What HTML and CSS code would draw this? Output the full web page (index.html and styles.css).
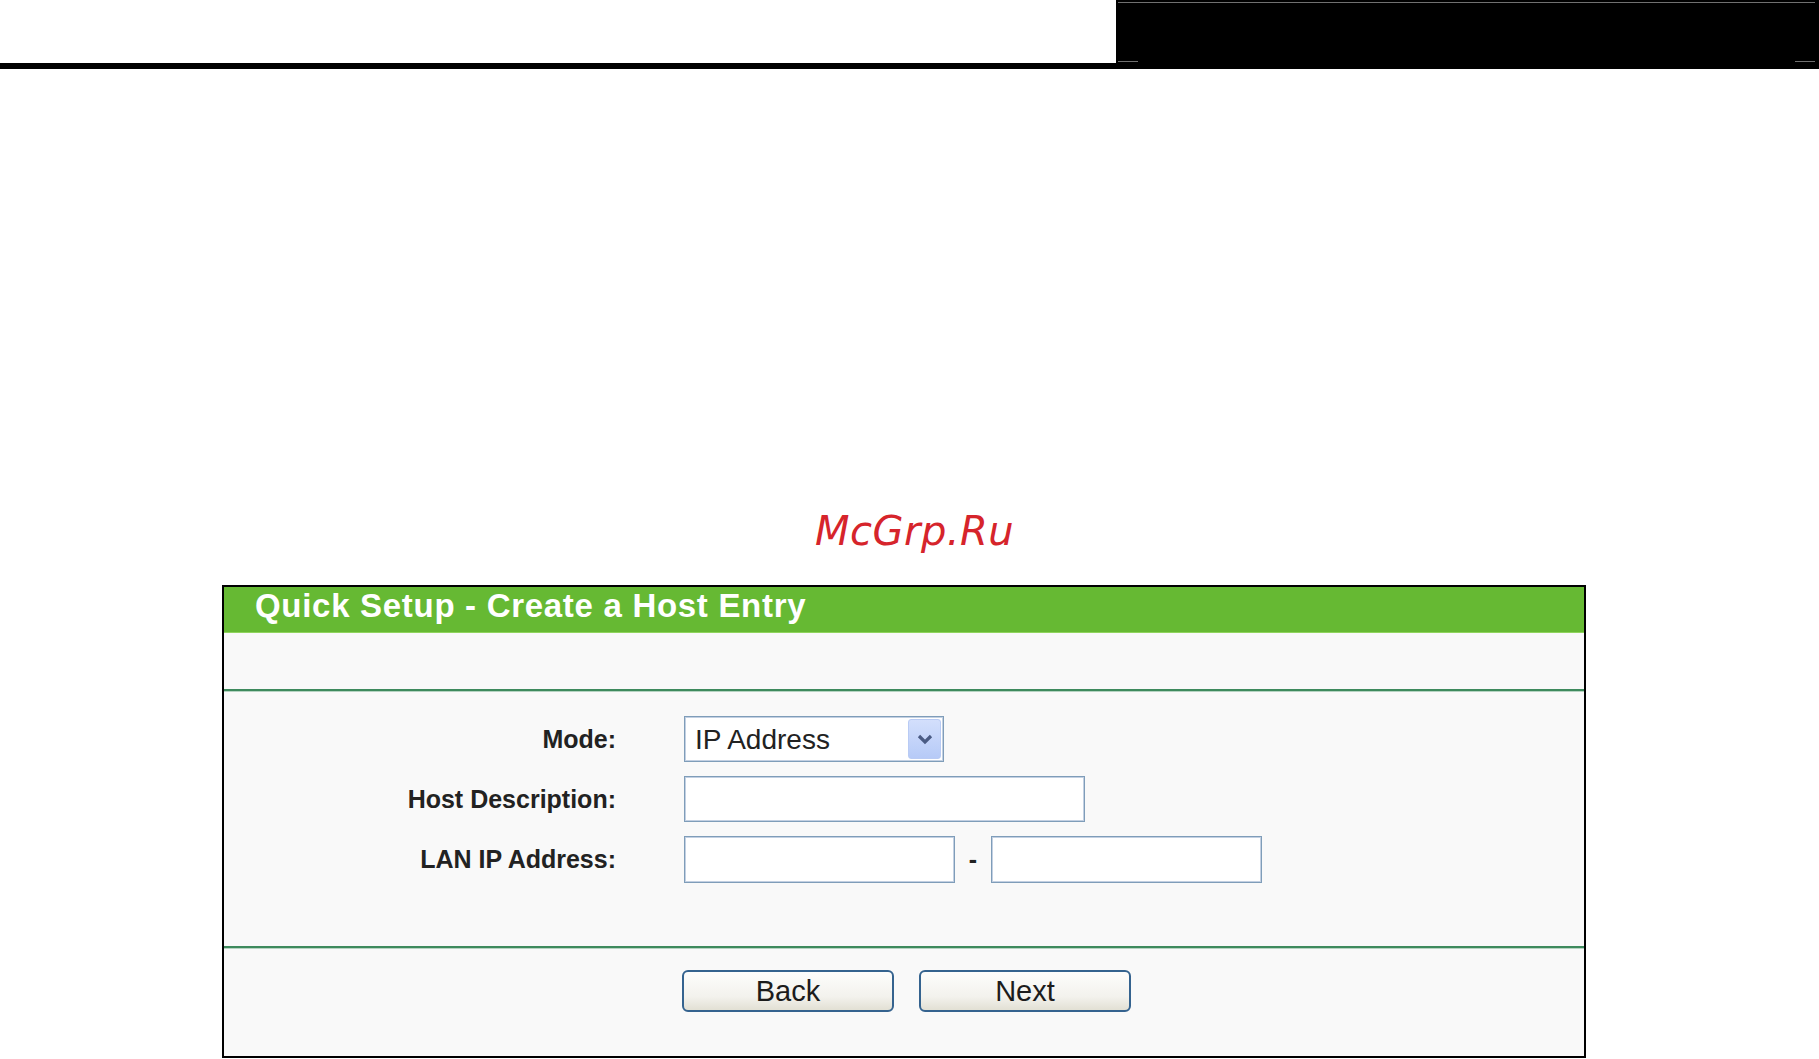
FILE: index.html
```html
<!DOCTYPE html>
<html lang="en">
<head>
    <meta charset="UTF-8">
    <meta name="viewport" content="width=device-width, initial-scale=1.0">
    <title>Quick Setup - Create a Host Entry</title>
<link rel="stylesheet" href="styles.css">
</head>
<body>
    <!-- top strip of the manual page -->
    <div class="topbar">
        <div class="topbar__blank"></div>
        <div class="topbar__dark">
            <div class="topbar__frame">
                <span class="tick"></span>
                <span class="tick"></span>
            </div>
        </div>
    </div>
    <div class="rule"></div>

    <div class="watermark">McGrp.Ru</div>

    <div class="panel">
        <div class="panel__title">Quick Setup - Create a Host Entry</div>
        <div class="panel__blank"></div>
        <div class="divider"></div>

        <form action="#" class="panel__form" id="hostForm">
            <label class="form__label" for="mode">Mode:</label>
            <div class="select">
                <select id="mode">
                    <option>IP Address</option>
                    <option>MAC Address</option>
                </select>
                <span class="select__arrow">
                    <svg width="16" height="11" viewBox="0 0 16 11"><path d="M2 2 L8 8 L14 2" fill="none" stroke="#4a5b84" stroke-width="3.2"/></svg>
                </span>
            </div>

            <label class="form__label" for="desc">Host Description:</label>
            <input type="text" id="desc" class="field field--wide">

            <label class="form__label" for="ipStart">LAN IP Address:</label>
            <div class="ip-range">
                <input type="text" id="ipStart" class="field field--ip">
                <span class="ip-range__dash">-</span>
                <input type="text" id="ipEnd" class="field field--ip">
            </div>
        </form>

        <div class="divider"></div>
        <div class="panel__buttons">
            <button type="button" class="btn">Back</button>
            <button type="button" class="btn">Next</button>
        </div>
    </div>
</body>
</html>
```

FILE: styles.css
```css
* {
  margin: 0;
  padding: 0;
  box-sizing: border-box;
}
body {
    font-family: "Liberation Sans", Arial, sans-serif;
    background: #fff;
    color: #222;
    height: 1059px;
    overflow: hidden;
}

/* top strip */
.topbar {
    display: flex;
    height: 63px;
}
.topbar__blank {
    width: 1116px;
}
.topbar__dark {
    flex: 1;
    background: #000;
    padding: 2px 4px 1px 2px;
}
.topbar__frame {
    height: 100%;
    border-top: 1px solid #707070;
    display: flex;
    justify-content: space-between;
    align-items: flex-end;
}
.tick {
    width: 20px;
    height: 1px;
    background: #707070;
}
.rule {
    height: 6px;
    background: #000;
}

.watermark {
    margin: 442px 0 0 815px;
    height: 40px;
    font-family: "DejaVu Sans", sans-serif;
    font-style: oblique;
    font-size: 40px;
    line-height: 40px;
    letter-spacing: 0.5px;
    color: #d6242b;
}

/* the router panel */
.panel {
    margin: 34px 0 0 222px;
    width: 1364px;
    border: 2px solid #000;
    background: #f9f9f9;
}
.panel__title {
    height: 46px;
    padding-left: 31px;
    background: #66b933;
    border-bottom: 1px solid #8fd45c;
    color: #fff;
    font-size: 33px;
    font-weight: bold;
    line-height: 38px;
    letter-spacing: 0.7px;
}
.panel__blank {
    height: 56px;
}
.divider {
    height: 3px;
    border-top: 2px solid #3e8a5d;
    background: #b6d4c2;
}

.panel__form {
    height: 254px;
    padding-top: 24px;
    display: grid;
    grid-template-columns: 392px auto;
    column-gap: 68px;
    row-gap: 14px;
    align-content: start;
    align-items: center;
    justify-items: start;
}
.form__label {
    justify-self: end;
    font-size: 25px;
    font-weight: bold;
    color: #222;
}

.select {
    display: flex;
    align-items: center;
    width: 260px;
    height: 46px;
    padding: 2px;
    border: 1px solid #7f9db9;
    box-shadow: inset 0 0 0 1px #c3d0e2;
    background: #fff;
}
.select select {
    flex: 1;
    height: 100%;
    padding-left: 8px;
    border: 0;
    outline: none;
    background: transparent;
    appearance: none;
    -webkit-appearance: none;
    font-family: "Liberation Sans", Arial, sans-serif;
    font-size: 28px;
    color: #222;
}
.select__arrow {
    width: 33px;
    height: 40px;
    display: flex;
    align-items: center;
    justify-content: center;
    border: 1px solid #b9cbf4;
    border-radius: 3px;
    background: linear-gradient(#d3dffc, #b6caf7);
}

.field {
    height: 46px;
    border: 1px solid #7f9db9;
    box-shadow: inset 0 0 0 1px #c3d0e2;
    background: #fff;
    font-family: "Liberation Sans", Arial, sans-serif;
    font-size: 26px;
    padding: 0 8px;
    outline: none;
}
.field--wide {
    width: 401px;
}
.field--ip {
    width: 271px;
    height: 47px;
}
.ip-range {
    display: flex;
    align-items: center;
}
.ip-range__dash {
    width: 36px;
    text-align: center;
    font-size: 25px;
    font-weight: bold;
}

.panel__buttons {
    height: 107px;
    padding: 21px 0 0 458px;
    display: flex;
    align-items: flex-start;
    gap: 25px;
}
.btn {
    width: 212px;
    height: 42px;
    border: 2px solid #35638f;
    border-radius: 6px;
    background: linear-gradient(#fdfdfc, #f3f2ed 65%, #e2e0d4);
    font-family: "Liberation Sans", Arial, sans-serif;
    font-size: 29px;
    line-height: 36px;
    color: #1c1c1c;
    cursor: pointer;
}
```
